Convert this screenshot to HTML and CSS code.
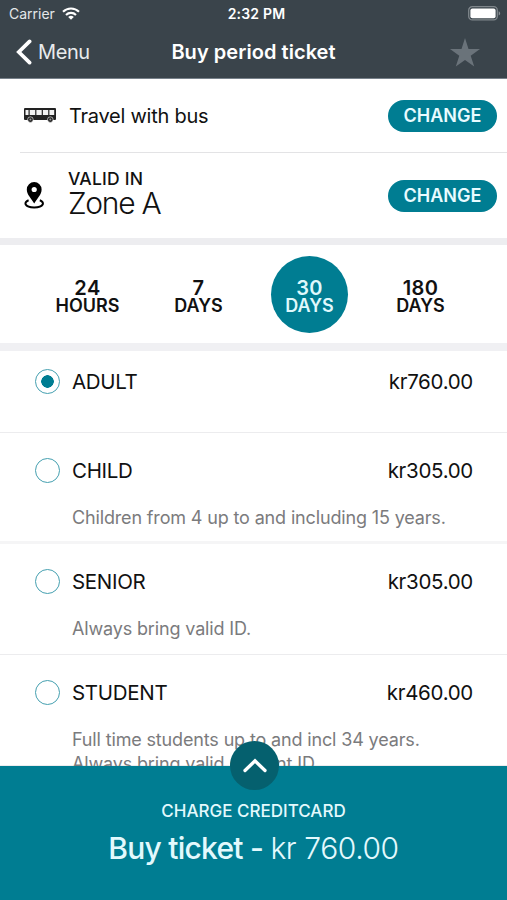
FILE: index.html
```html
<!DOCTYPE html>
<html lang="en">

<head>
    <meta charset="UTF-8">
    <meta name="viewport" content="width=device-width, initial-scale=1.0">
    <title>Buy period ticket</title>
    <link rel="stylesheet" href="styles.css">
</head>

<body>
    <div class="screen">

        <!-- Header -->
        <header class="header">
            <div class="status-bar">
                <div class="carrier">
                    <span>Carrier</span>
                    <svg class="wifi" width="18" height="13" viewBox="0 0 18 13">
                        <g fill="none" stroke="#fff" stroke-width="2.1">
                            <path d="M1 4.8a11.4 11.4 0 0 1 16 0"/>
                            <path d="M4 7.9a7.1 7.1 0 0 1 10 0"/>
                        </g>
                        <path d="M6.2 10a4 4 0 0 1 5.6 0L9 12.8z" fill="#fff"/>
                    </svg>
                </div>
                <span class="clock">2:32 PM</span>
                <svg class="battery" width="33" height="15" viewBox="0 0 33 15">
                    <rect x=".7" y=".7" width="28.6" height="13.2" rx="3.6" fill="none" stroke="#7f868b" stroke-width="1.3"/>
                    <rect x="2.4" y="2.4" width="25.2" height="9.8" rx="2" fill="#fff"/>
                    <path d="M30.7 5.2a2.4 2.4 0 0 1 0 4.4z" fill="#8b9196"/>
                </svg>
            </div>
            <nav class="nav-bar">
                <a class="back">
                    <svg width="16" height="26" viewBox="0 0 16 26">
                        <path d="M13.6 2.4L2.8 13l10.8 10.6" fill="none" stroke="#fff" stroke-width="3.7" stroke-linecap="round"/>
                    </svg>
                    <span>Menu</span>
                </a>
                <h1 class="title">Buy period ticket</h1>
                <svg class="star" width="30" height="29" viewBox="0 0 30 29">
                    <path d="M15 0l3.5 10.9H30l-9.3 6.8 3.5 10.9L15 21.9l-9.2 6.7 3.5-10.9L0 10.9h11.5z" fill="#6a737a"/>
                </svg>
            </nav>
        </header>

        <!-- Trip -->
        <section class="trip">
            <div class="trip-row bus">
                <svg class="trip-icon" width="32" height="15" viewBox="0 0 32 15">
                    <path d="M1 0h30q1 0 1 1v10q0 1-1 1H1q-1 0-1-1V1q0-1 1-1z" fill="#222"/>
                    <path d="M1.5 2h3v5h-3zM5.7 2h5.5v5H5.7zM12.4 2h5.3v5h-5.3zM18.9 2h5.3v5h-5.3zM25.4 2h4.8v5h-4.8z" fill="#f2f2f2"/>
                    <g fill="#222" stroke="#fff" stroke-width=".6">
                        <circle cx="6.4" cy="11.6" r="2.8"/>
                        <circle cx="26.3" cy="11.6" r="2.8"/>
                    </g>
                    <g fill="#999">
                        <circle cx="6.4" cy="11.6" r="1"/>
                        <circle cx="26.3" cy="11.6" r="1"/>
                    </g>
                </svg>
                <span class="bus-text">Travel with bus</span>
                <button class="change">CHANGE</button>
            </div>
            <div class="trip-row zone">
                <svg class="trip-icon" width="21" height="27" viewBox="0 0 21 27">
                    <path d="M10.2 0a7.4 7.4 0 0 1 7.4 7.4c0 5.2-4.6 9-7.4 14-2.8-5-7.4-8.8-7.4-14A7.4 7.4 0 0 1 10.2 0z" fill="#000"/>
                    <circle cx="10.2" cy="7.5" r="2.6" fill="#fff"/>
                    <path d="M4.6 18.2C-.5 20 .2 25.4 10.2 25.4s10.7-5.4 5.6-7.2" fill="none" stroke="#000" stroke-width="2"/>
                </svg>
                <div class="zone-text">
                    <p class="zone-label">VALID IN</p>
                    <p class="zone-name">Zone A</p>
                </div>
                <button class="change">CHANGE</button>
            </div>
        </section>

        <!-- Period -->
        <section class="periods">
            <div class="period"><b>24</b><span>HOURS</span></div>
            <div class="period"><b>7</b><span>DAYS</span></div>
            <div class="period selected"><b>30</b><span>DAYS</span></div>
            <div class="period"><b>180</b><span>DAYS</span></div>
        </section>

        <!-- Tickets -->
        <section class="tickets">
            <div class="ticket adult">
                <div class="ticket-head">
                    <span class="radio checked"></span>
                    <span class="ticket-name">ADULT</span>
                    <span class="price">kr760.00</span>
                </div>
            </div>
            <div class="ticket child">
                <div class="ticket-head">
                    <span class="radio"></span>
                    <span class="ticket-name">CHILD</span>
                    <span class="price">kr305.00</span>
                </div>
                <p class="info">Children from 4 up to and including 15 years.</p>
            </div>
            <div class="ticket">
                <div class="ticket-head">
                    <span class="radio"></span>
                    <span class="ticket-name">SENIOR</span>
                    <span class="price">kr305.00</span>
                </div>
                <p class="info">Always bring valid ID.</p>
            </div>
            <div class="ticket">
                <div class="ticket-head">
                    <span class="radio"></span>
                    <span class="ticket-name">STUDENT</span>
                    <span class="price">kr460.00</span>
                </div>
                <p class="info">Full time students up to and incl 34 years.<br>Always bring valid student ID.</p>
            </div>
        </section>

        <!-- Buy -->
        <footer class="buy">
            <div class="expand">
                <svg width="24" height="15" viewBox="0 0 24 15">
                    <path d="M2 12.5l10-9.7 10 9.7" fill="none" stroke="#fff" stroke-width="3.3" stroke-linecap="round"/>
                </svg>
            </div>
            <p class="charge">CHARGE CREDITCARD</p>
            <p class="total">Buy ticket - <span>kr 760.00</span></p>
        </footer>
    </div>
</body>

</html>
```

FILE: styles.css
```css
* {
    box-sizing: border-box;
}

body {
    margin: 0;
    font-family: Inter, "Liberation Sans", sans-serif;
    color: #111;
    background-color: white;
}

p,
h1 {
    margin: 0;
}

svg {
    display: block;
    flex-shrink: 0;
}

.screen {
    display: flex;
    flex-direction: column;
    width: 507px;
    height: 900px;
    overflow: hidden;
}

.header {
    height: 79px;
    background-color: #3a444b;
    border-bottom: 1px solid #77818a;
    color: white;
}

.status-bar {
    display: grid;
    grid-template-columns: 1fr auto 1fr;
    align-items: center;
    height: 27px;
    padding: 0 6px 0 9px;
    font-size: 14px;
    line-height: 27px;
}

.carrier {
    display: flex;
    gap: 7px;
    align-items: center;
    color: #e4e7e9;
}

.clock {
    padding-left: 3px;
    font-weight: 600;
    font-size: 14px;
    letter-spacing: 0.2px;
}

.battery {
    justify-self: end;
}

.nav-bar {
    display: grid;
    grid-template-columns: 1fr auto 1fr;
    align-items: center;
    height: 50px;
    padding: 0 16px;
}

.back {
    display: flex;
    align-items: center;
    gap: 6px;
    font-size: 20px;
    letter-spacing: -0.4px;
    color: #e8ebed;
}

.title {
    font-size: 20px;
    font-weight: 600;
    letter-spacing: 0.05px;
}

.star {
    justify-self: end;
    margin-right: 11px;
}

.trip {
    height: 166px;
    border-bottom: 7px solid #ededf0;
}

.trip-row {
    display: flex;
    align-items: center;
    padding-right: 10px;
}

.bus {
    height: 74px;
    margin-left: 20px;
    padding-left: 4px;
    border-bottom: 1px solid #e3e3e5;
}

.zone {
    height: 85px;
    padding-left: 24px;
}

.bus-text {
    margin: 1px 0 0 13px;
    font-size: 20px;
    letter-spacing: -0.25px;
}

.zone-text {
    margin: -5px 0 0 23px;
}

.zone-label {
    font-size: 17.5px;
    font-weight: 500;
    letter-spacing: 0.2px;
    line-height: 21px;
}

.zone-name {
    font-size: 30px;
    font-weight: 300;
    letter-spacing: -1.3px;
    line-height: 29px;
}

.change {
    width: 109px;
    height: 32px;
    margin-left: auto;
    padding: 0;
    border: none;
    border-radius: 16px;
    background-color: #007d92;
    color: #e9fbff;
    font-family: inherit;
    font-size: 18px;
    font-weight: 600;
}

.periods {
    display: flex;
    align-items: center;
    justify-content: space-between;
    height: 106px;
    padding: 0 48px 0 49px;
    border-bottom: 8px solid #f0f0f3;
}

.period {
    display: flex;
    flex-direction: column;
    align-items: center;
    justify-content: center;
    width: 77px;
    height: 77px;
    padding-top: 5px;
    border-radius: 50%;
    font-size: 18px;
    font-weight: 600;
    line-height: 18px;
}

.period b {
    font-size: 20px;
    font-weight: 600;
    letter-spacing: 0.4px;
}

.selected {
    background-color: #007d92;
    color: #dff8fc;
}

.tickets {
    height: 415px;
    overflow: hidden;
}

.ticket {
    height: 111px;
    padding: 24px 34px 0 35px;
    border-bottom: 1px solid #ececee;
}

.adult {
    height: 82px;
    padding-top: 18px;
}

.child {
    border-bottom: 3px solid #f5f5f6;
}

.ticket-head {
    display: flex;
    align-items: center;
    height: 26px;
    font-size: 20.5px;
    letter-spacing: -0.3px;
}

.adult .ticket-head {
    height: 25px;
}

.radio {
    width: 25px;
    height: 25px;
    margin-right: 12px;
    border: 1.5px solid #45a0b0;
    border-radius: 50%;
}

.checked {
    background: radial-gradient(circle, #007d92 6px, transparent 6.5px);
}

.price {
    margin-left: auto;
}

.info {
    margin: 23px 0 0 37px;
    font-size: 18px;
    letter-spacing: -0.15px;
    line-height: 24px;
    color: #7b7b7d;
    white-space: nowrap;
}

.buy {
    position: relative;
    height: 134px;
    padding-top: 34px;
    background-color: #007d92;
    color: #e3f9fd;
    text-align: center;
}

.expand {
    position: absolute;
    top: -25px;
    left: 230px;
    display: flex;
    align-items: center;
    justify-content: center;
    width: 49px;
    height: 49px;
    border-radius: 50%;
    background-color: #05606e;
}

.charge {
    font-size: 17px;
    font-weight: 500;
    line-height: 22px;
}

.total {
    margin-top: 8px;
    font-size: 30px;
    font-weight: 500;
    letter-spacing: -0.75px;
    line-height: 36px;
}

.total span {
    font-weight: 300;
    letter-spacing: -0.4px;
}
```
